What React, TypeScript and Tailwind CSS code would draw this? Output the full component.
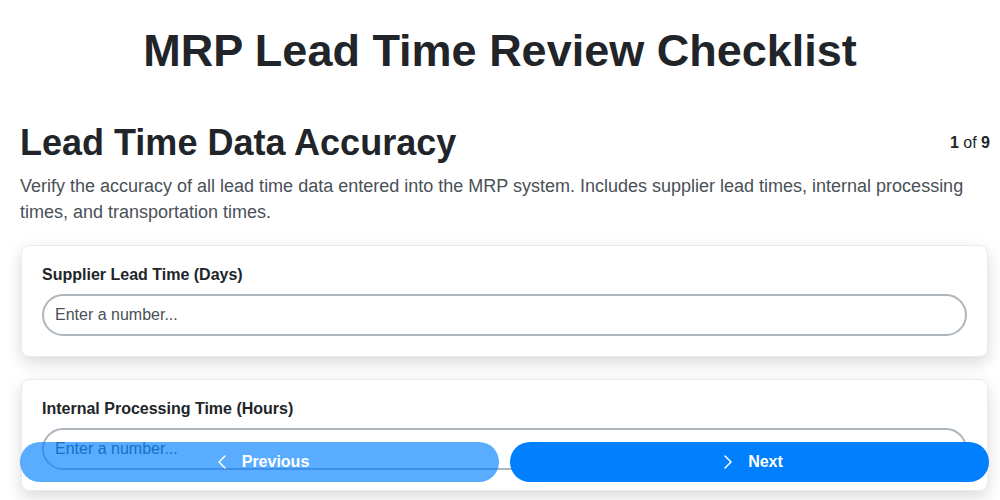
import { ChevronLeft, ChevronRight } from 'lucide-react';

const fields = [
    { id: 'supplier', label: 'Supplier Lead Time (Days)' },
    { id: 'internal', label: 'Internal Processing Time (Hours)' },
    { id: 'transport', label: 'Transportation Time (Days)' },
];

export default function App() {
    return (
        <div
            className="min-h-screen bg-white pb-24 text-[#212529]"
            style={{ fontFamily: '"Liberation Sans", Arial, sans-serif' }}
        >
            {/* Page title */}
            <h1 className="pt-6 text-center text-[45px] leading-[54px] font-bold">
                MRP Lead Time Review Checklist
            </h1>

            <div className="pr-[10px] pl-5">
                {/* Step header */}
                <div className="mt-[43px] flex items-center justify-between">
                    <h2 className="text-4xl leading-[43px] font-bold">
                        Lead Time Data Accuracy
                    </h2>
                    <div className="text-base">
                        <span className="font-bold">1</span> of{' '}
                        <span className="font-bold">9</span>
                    </div>
                </div>
                <p className="mt-[9px] pr-4 text-lg leading-[26px] text-[#495057]">
                    Verify the accuracy of all lead time data entered into the
                    MRP system. Includes supplier lead times, internal
                    processing times, and transportation times.
                </p>

                {/* Fields */}
                <div className="mt-5 mr-[2px] ml-px flex flex-col gap-[22px]">
                    {fields.map((field) => (
                        <div
                            key={field.id}
                            className="rounded-lg border border-[#e9ecef] bg-white p-5 shadow-[0_6px_16px_rgba(0,0,0,0.15)]"
                        >
                            <label
                                htmlFor={field.id}
                                className="mb-[10px] block text-base leading-[18px] font-bold"
                            >
                                {field.label}
                            </label>
                            <input
                                id={field.id}
                                type="text"
                                placeholder="Enter a number..."
                                className="block h-[42px] w-full rounded-full border-2 border-[#adb5bd] bg-white px-[11px] text-base text-[#212529] outline-none placeholder:text-[#495057]"
                            />
                        </div>
                    ))}
                </div>
            </div>

            {/* Navigation */}
            <div className="fixed right-[11px] bottom-[18px] left-5 flex gap-[11px]">
                <button className="flex h-10 flex-1 items-center justify-center gap-2 rounded-full bg-[#0080ff] text-base font-bold text-white opacity-65">
                    <ChevronLeft className="h-6 w-6" strokeWidth={1.5} />
                    Previous
                </button>
                <button className="flex h-10 flex-1 items-center justify-center gap-2 rounded-full bg-[#0080ff] text-base font-bold text-white">
                    <ChevronRight className="h-6 w-6" strokeWidth={1.5} />
                    Next
                </button>
            </div>
        </div>
    );
}
